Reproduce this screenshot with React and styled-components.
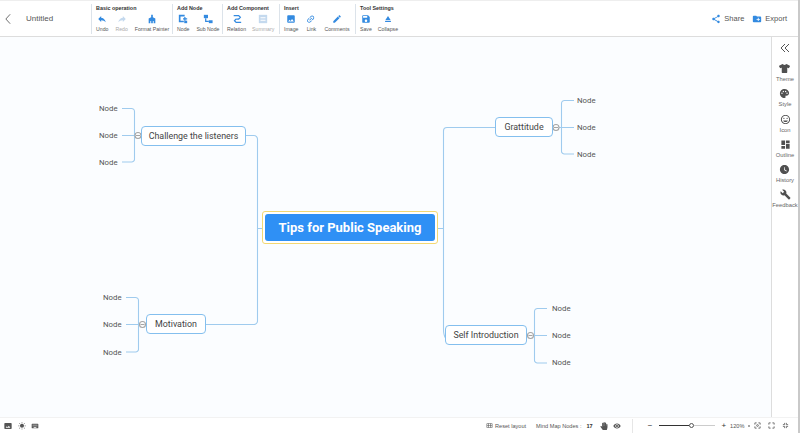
import React from "react";
import styled, { createGlobalStyle } from "styled-components";
import {
    MdReply, MdImage, MdLink, MdEdit, MdSave, MdEject, MdShare,
    MdCreateNewFolder, MdPalette, MdInsertEmoticon, MdDashboard, MdWatchLater,
    MdBuild, MdVisibility,
    MdCalendarViewMonth, MdPhotoSizeSelectActual, MdWbSunny, MdKeyboard,
} from "react-icons/md";
import { FaTshirt, FaHandPaper } from "react-icons/fa";

const GlobalStyle = createGlobalStyle`
    html, body {
        margin: 0;
        padding: 0;
        background: #fff;
    }
    body {
        font-family: "Liberation Sans", Arial, sans-serif;
        overflow: hidden;
    }
`;

const Page = styled.div`
    width: 800px;
    height: 433px;
    display: flex;
    overflow: hidden;
`;

const Content = styled.div`
    flex: 1;
    min-width: 0;
    display: flex;
    flex-direction: column;
`;

const EdgeStrip = styled.div`
    width: 2px;
    background: #c9c9c9;
`;

const Toolbar = styled.div`
    height: 37px;
    box-sizing: border-box;
    border-top: 1px solid #eee;
    border-bottom: 1px solid #ddd;
    display: flex;
    align-items: center;
    background: #fff;
`;

const BackButton = styled.div`
    width: 26px;
    padding-left: 5px;
    box-sizing: border-box;
    display: flex;
    svg {
        width: 6px;
        height: 12px;
        fill: none;
        stroke: #666;
        stroke-width: 1.1;
    }
`;

const Title = styled.div`
    width: 65px;
    font-size: 8px;
    color: #555;
`;

const Group = styled.div`
    height: 30px;
    border-left: 1px solid #dce3ea;
    padding-left: 4px;
    box-sizing: border-box;
    width: ${(p) => p.$w}px;
    display: flex;
    flex-direction: column;
`;

const GroupTitle = styled.div`
    font-size: 5.4px;
    font-weight: bold;
    color: #333;
    line-height: 8px;
    white-space: nowrap;
`;

const Tools = styled.div`
    display: flex;
    gap: ${(p) => p.$gap}px;
    margin-top: 2px;
`;

const Tool = styled.div`
    display: flex;
    flex-direction: column;
    align-items: center;
    font-size: 5.2px;
    line-height: 8px;
    white-space: nowrap;
    color: ${(p) => (p.$off ? "#aaa" : "#555")};
    svg {
        width: 10px;
        height: 10px;
        margin-bottom: 1px;
        color: ${(p) => (p.$off ? "#c4d9ee" : "#338ae0")};
    }
`;

const Flip = styled.span`
    display: flex;
    transform: ${(p) => p.$t};
`;

const ToolbarRight = styled.div`
    margin-left: auto;
    display: flex;
    align-items: center;
    gap: 8px;
    padding-right: 11px;
`;

const Action = styled.div`
    display: flex;
    align-items: center;
    gap: 3px;
    font-size: 7.5px;
    color: #555;
    svg {
        width: 10px;
        height: 10px;
        color: #338ae0;
    }
`;

const Main = styled.div`
    flex: 1;
    min-height: 0;
    display: flex;
`;

const Canvas = styled.div`
    position: relative;
    flex: 1;
    background: #fbfdff;
    overflow: hidden;
`;

const Lines = styled.svg`
    position: absolute;
    left: 0;
    top: 0;
    fill: none;
    stroke: #9fcbee;
    stroke-width: 1.1;
`;

const RootNode = styled.div`
    position: absolute;
    left: 262px;
    top: 174px;
    width: 176px;
    height: 33px;
    box-sizing: border-box;
    padding: 2px;
    border: 1px solid #f3d872;
    border-radius: 3px;
    background: #fff;
    display: flex;
`;

const RootLabel = styled.div`
    flex: 1;
    background: #2f90f5;
    border-radius: 3px;
    color: #fff;
    font-family: Roboto, sans-serif;
    font-weight: 700;
    font-size: 13px;
    display: flex;
    align-items: center;
    justify-content: center;
    white-space: nowrap;
`;

const Topic = styled.div`
    position: absolute;
    left: ${(p) => p.$x}px;
    top: ${(p) => p.$y - 37}px;
    width: ${(p) => p.$w}px;
    height: 20px;
    box-sizing: border-box;
    border: 1px solid #84bfee;
    border-radius: 4px;
    background: #fff;
    color: #444;
    font-family: Roboto, sans-serif;
    font-size: 8.9px;
    display: flex;
    align-items: center;
    justify-content: center;
    white-space: nowrap;
`;

const Leaf = styled.div`
    position: absolute;
    left: ${(p) => p.$x}px;
    top: ${(p) => p.$y - 37 - 5}px;
    color: #555;
    font-family: Roboto, sans-serif;
    font-size: 7.8px;
    line-height: 12px;
`;

const Sidebar = styled.div`
    width: 26px;
    border-left: 1px solid #ddd;
    background: #fff;
    display: flex;
    flex-direction: column;
    align-items: center;
    padding-top: 6px;
`;

const Collapse = styled.div`
    height: 20px;
    display: flex;
    svg {
        width: 10px;
        height: 10px;
        fill: none;
        stroke: #555;
        stroke-width: 1;
    }
`;

const SideItem = styled.div`
    height: 25.3px;
    display: flex;
    flex-direction: column;
    align-items: center;
    font-size: 5.8px;
    line-height: 8px;
    color: #666;
    white-space: nowrap;
    svg {
        width: 11px;
        height: 11px;
        color: #505050;
        margin-bottom: 1px;
    }
`;

const StatusBar = styled.div`
    height: 16px;
    display: flex;
    align-items: center;
    background: #fff;
    border-top: 1px solid #f2f2f2;
    box-sizing: border-box;
    font-size: 5.6px;
    color: #555;
`;

const StatusIcons = styled.div`
    display: flex;
    gap: 5.5px;
    padding-left: 4px;
    color: #555;
    svg {
        width: 8px;
        height: 8px;
    }
`;

const StatusText = styled.div`
    display: flex;
    align-items: center;
    gap: 2px;
    margin-left: ${(p) => p.$ml}px;
    white-space: nowrap;
    svg {
        width: ${(p) => p.$icon || 7}px;
        height: ${(p) => p.$icon || 7}px;
    }
`;

const Count = styled.span`
    font-weight: bold;
    color: #333;
    margin-left: 3px;
`;

const Divider = styled.div`
    width: 1px;
    height: 14px;
    background: #e6e6e6;
    margin: 0 15px 0 11px;
`;

const Sign = styled.span`
    font-size: 8px;
    color: #333;
    margin: 0 ${(p) => p.$mr}px 0 ${(p) => p.$ml}px;
`;

const Slider = styled.div`
    width: 56px;
    display: flex;
    align-items: center;
`;

const SliderBar = styled.div`
    height: 1px;
    width: ${(p) => p.$w}px;
    background: ${(p) => p.$c};
`;

const Thumb = styled.div`
    width: 3px;
    height: 3px;
    border: 1px solid #555;
    border-radius: 50%;
    background: #fff;
`;

const Dot = styled.span`
    width: 2px;
    height: 2px;
    border-radius: 50%;
    background: #888;
    margin-left: 4px;
`;

const ViewIcons = styled.div`
    display: flex;
    gap: 7px;
    margin-left: 4px;
    svg {
        width: 7px;
        height: 7px;
        fill: none;
        stroke: #666;
        stroke-width: 1;
    }
`;

const NodeIcon = () => (
    <svg viewBox="0 0 12 12" fill="currentColor">
        <path d="M1 1h7v2H3v5h4v2H1z" />
        <path d="M6 5h1.500V3.500H9V5h2v1.500H9V8H7.500V6.500H6z" />
        <rect x="7.500" y="8" width="3.500" height="3" />
    </svg>
);

const SubNodeIcon = () => (
    <svg viewBox="0 0 12 12" fill="currentColor">
        <rect x="1" y="1" width="5" height="4" />
        <path d="M2.500 5h1.500v3h3v1.500H2.500z" />
        <rect x="7" y="7.500" width="4.500" height="3.500" />
    </svg>
);

const RelationIcon = () => (
    <svg viewBox="0 0 12 12" fill="none" stroke="currentColor" strokeWidth="1.500">
        <path d="M2 2h6l2 2-2 2H5" />
        <path d="M5 6 3 8l2 2h6" />
    </svg>
);

const SummaryIcon = () => (
    <svg viewBox="0 0 12 12" fill="currentColor">
        <path d="M1 1h10v10H1z" />
        <path d="M3 4h6v1H3zM3 7h6v1H3z" fill="#fff" />
    </svg>
);

const PainterIcon = () => (
    <svg viewBox="0 0 12 12" fill="currentColor">
        <path d="M5 1h2v3l3 1.500V11H8V8.500H7V11H5V8.500H4V11H2V5.500L5 4z" />
    </svg>
);

const groups = [
    {
        title: "Basic operation", w: 81, gap: 7, tools: [
            { label: "Undo", icon: <MdReply /> },
            { label: "Redo", off: true, icon: <Flip $t="scaleX(-1)"><MdReply /></Flip> },
            { label: "Format Painter", icon: <PainterIcon /> },
        ],
    },
    {
        title: "Add Node", w: 50, gap: 7, tools: [
            { label: "Node", icon: <NodeIcon /> },
            { label: "Sub Node", icon: <SubNodeIcon /> },
        ],
    },
    {
        title: "Add Component", w: 57, gap: 6, tools: [
            { label: "Relation", icon: <RelationIcon /> },
            { label: "Summary", off: true, icon: <SummaryIcon /> },
        ],
    },
    {
        title: "Insert", w: 76, gap: 8, tools: [
            { label: "Image", icon: <MdImage /> },
            { label: "Link", icon: <Flip $t="rotate(-45deg)"><MdLink /></Flip> },
            { label: "Comments", icon: <MdEdit /> },
        ],
    },
    {
        title: "Tool Settings", w: 60, gap: 6, tools: [
            { label: "Save", icon: <MdSave /> },
            { label: "Collapse", icon: <MdEject /> },
        ],
    },
];

const sideItems = [
    { label: "Theme", icon: <FaTshirt /> },
    { label: "Style", icon: <MdPalette /> },
    { label: "Icon", icon: <MdInsertEmoticon /> },
    { label: "Outline", icon: <MdDashboard /> },
    { label: "History", icon: <MdWatchLater /> },
    { label: "Feedback", icon: <MdBuild /> },
];

const topics = [
    { label: "Challenge the listeners", x: 141, y: 126, w: 105 },
    { label: "Grattitude", x: 495, y: 117, w: 58 },
    { label: "Self Introduction", x: 445, y: 325, w: 82 },
    { label: "Motivation", x: 146, y: 314, w: 60 },
];

const leaves = [
    [99, 108], [99, 135], [99, 162],
    [103, 297], [103, 324], [103, 352],
    [577, 100], [577, 127], [577, 154],
    [552, 308], [552, 335], [552, 362],
];

const Fold = ({ x, y }) => (
    <g stroke="#a5a5a5">
        <circle cx={x} cy={y} r="3" fill="#fff" />
        <path d={`M${x - 2} ${y}h4`} />
    </g>
);

function MapLines() {
    return (
        <Lines width="771" height="380" viewBox="0 37 771 380">
            {/* main branches */}
            <path d="M246 135.500h8a3.500 3.500 0 0 1 3.500 3.500v182a3.500 3.500 0 0 1-3.500 3.500h-48" />
            <path d="M257.500 228.500h5M438 228.500h5.500" />
            <path d="M495 127.500h-48a3.500 3.500 0 0 0-3.500 3.500v198q0 6 2 9" />
            {/* left top */}
            <path d="M122 108.500h9a3 3 0 0 1 3.500 3v47a3 3 0 0 1-3.500 3.500h-9M122 135.500h13" />
            <Fold x={138} y={135.5} />
            {/* left bottom */}
            <path d="M126 297.500h9a3 3 0 0 1 3.500 3v48a3 3 0 0 1-3.500 3.500h-9M126 324.500h14" />
            <Fold x={142.5} y={324.5} />
            {/* right top */}
            <path d="M574 100.500h-9a3 3 0 0 0-3.500 3v47a3 3 0 0 0 3.500 3.500h9M574 127.500h-15" />
            <Fold x={556} y={127.5} />
            {/* right bottom */}
            <path d="M547 308.500h-9a3 3 0 0 0-3.500 3v48a3 3 0 0 0 3.500 3.500h9M547 335.500h-14" />
            <Fold x={530.5} y={335.5} />
        </Lines>
    );
}

export default function App() {
    return (
        <Page>
            <GlobalStyle />
            <Content>
                <Toolbar>
                    <BackButton>
                        <svg viewBox="0 0 7 13"><path d="M6 1 1 6.500 6 12" /></svg>
                    </BackButton>
                    <Title>Untitled</Title>
                    {groups.map((g) => (
                        <Group key={g.title} $w={g.w}>
                            <GroupTitle>{g.title}</GroupTitle>
                            <Tools $gap={g.gap}>
                                {g.tools.map((t) => (
                                    <Tool key={t.label} $off={t.off}>
                                        {t.icon}
                                        {t.label}
                                    </Tool>
                                ))}
                            </Tools>
                        </Group>
                    ))}
                    <ToolbarRight>
                        <Action><MdShare />Share</Action>
                        <Action><MdCreateNewFolder />Export</Action>
                    </ToolbarRight>
                </Toolbar>

                <Main>
                    <Canvas>
                        <MapLines />
                        <RootNode><RootLabel>Tips for Public Speaking</RootLabel></RootNode>
                        {topics.map((t) => (
                            <Topic key={t.label} $x={t.x} $y={t.y} $w={t.w}>{t.label}</Topic>
                        ))}
                        {leaves.map(([x, y]) => (
                            <Leaf key={`${x}-${y}`} $x={x} $y={y}>Node</Leaf>
                        ))}
                    </Canvas>
                    <Sidebar>
                        <Collapse>
                            <svg viewBox="0 0 10 10"><path d="M5 1 1 5l4 4M9 1 5 5l4 4" /></svg>
                        </Collapse>
                        {sideItems.map((s) => (
                            <SideItem key={s.label}>{s.icon}{s.label}</SideItem>
                        ))}
                    </Sidebar>
                </Main>

                <StatusBar>
                    <StatusIcons>
                        <MdPhotoSizeSelectActual />
                        <MdWbSunny />
                        <MdKeyboard />
                    </StatusIcons>
                    <StatusText $ml={447}><MdCalendarViewMonth />Reset layout</StatusText>
                    <StatusText $ml={10}>Mind Map Nodes :<Count>17</Count></StatusText>
                    <StatusText $ml={7} $icon={8}><FaHandPaper /></StatusText>
                    <StatusText $ml={5} $icon={8}><MdVisibility /></StatusText>
                    <Divider />
                    <Sign $ml={0} $mr={7}>−</Sign>
                    <Slider>
                        <SliderBar $w={30} $c="#333" />
                        <Thumb />
                        <SliderBar $w={21} $c="#ccc" />
                    </Slider>
                    <Sign $ml={6} $mr={4}>+</Sign>
                    <span>120%</span>
                    <Dot />
                    <ViewIcons>
                        <svg viewBox="0 0 8 8"><path d="M1 3V1h2M5 1h2v2M7 5v2H5M3 7H1V5" /><circle cx="4" cy="4" r="1" /></svg>
                        <svg viewBox="0 0 8 8"><path d="M1 3V1h2M5 1h2v2M7 5v2H5M3 7H1V5" /></svg>
                        <svg viewBox="0 0 8 8"><path d="M3 1v2H1M5 1v2h2M7 5H5v2M1 5h2v2" /></svg>
                    </ViewIcons>
                </StatusBar>
            </Content>
            <EdgeStrip />
        </Page>
    );
}
